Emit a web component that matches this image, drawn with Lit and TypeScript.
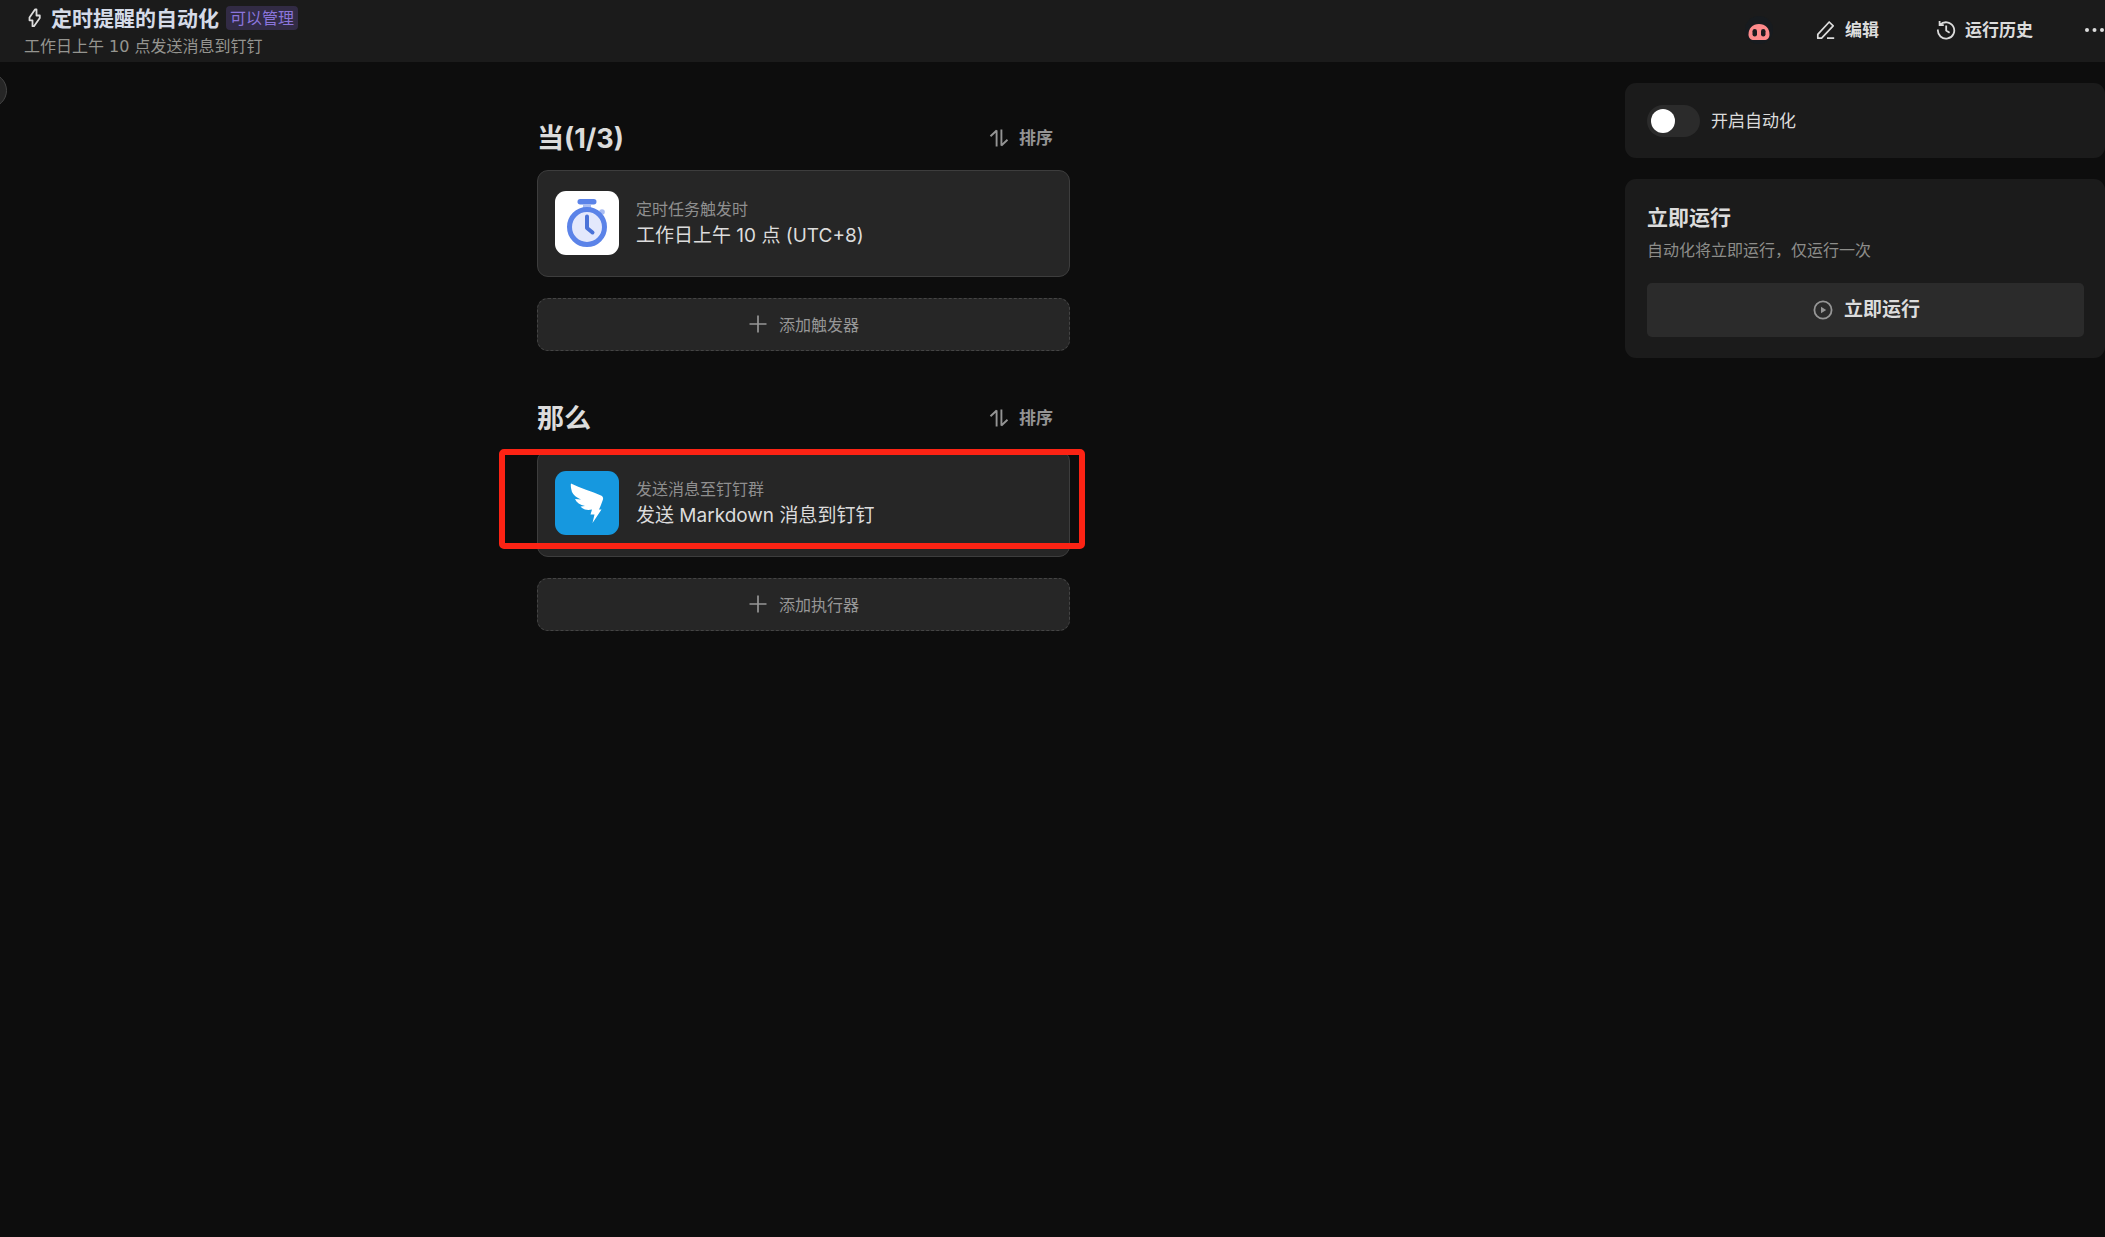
import { LitElement, html, svg, css, nothing } from "lit";
import { customElement, property, state } from "lit/decorators.js";

const icons = {
  bolt: svg`<path d="M11 1.500 5.500 9.500V12.300H8.500L8.500 18.200 10 18.200 15.800 10V7.500H12.500V1.500Z" fill="none" stroke="currentColor" stroke-width="1.800" stroke-linejoin="round"/>`,
  pig: svg`<circle cx="14" cy="14" r="14" fill="#171b1f"/><path d="M14 8C7.500 8 3.500 12.500 3.500 18.500 3.500 22 5.500 24 9 24h10c3.500 0 5.500-2 5.500-5.500C24.500 12.500 20.500 8 14 8Z" fill="#fe8b8c"/><rect x="7.500" y="13" width="4.500" height="7.500" rx="2.200" fill="#1b1b1f"/><rect x="16" y="13" width="4.500" height="7.500" rx="2.200" fill="#1b1b1f"/>`,
  edit: svg`<path d="M1.800 18.200V14.300L13.200 2 17.200 5.900 5.600 18.200ZM11 18.200h7.200" fill="none" stroke="currentColor" stroke-width="1.700" stroke-linejoin="round"/>`,
  history: svg`<path d="M4 4.900A8.200 8.200 0 1 1 1.900 9.500M3.600 1v4.200H7.800M10.200 5.500V10.600L13.600 12.800" fill="none" stroke="currentColor" stroke-width="1.800"/>`,
  more: svg`<circle cx="2" cy="10" r="2" fill="currentColor"/><circle cx="9.500" cy="10" r="2" fill="currentColor"/><circle cx="17" cy="10" r="2" fill="currentColor"/>`,
  sort: svg`<path d="M7.600 18.500V2.500L1.500 8.200M12.400 1.500V17.500L18.500 11.800" fill="none" stroke="currentColor" stroke-width="1.900" stroke-linejoin="bevel"/>`,
  plus: svg`<path d="M10 .500v17M1.500 9h17" fill="none" stroke="currentColor" stroke-width="1.700"/>`,
  play: svg`<circle cx="10" cy="10" r="8.600" fill="none" stroke="currentColor" stroke-width="1.800"/><path d="M8 6.800v6.400L13.200 10Z" fill="currentColor"/>`,
  clock: svg`<rect width="64" height="64" fill="#fff"/><circle cx="47" cy="21" r="2.800" fill="#a9bdf3"/><rect x="22.500" y="8" width="19" height="5.500" rx="2.700" fill="#5b83e8"/><path d="M28 13h8v4h-8Z" fill="#a9bdf3"/><circle cx="32" cy="36" r="17.500" fill="#e3e8fc" stroke="#5b83e8" stroke-width="5"/><path d="M32 25.500V37L37.500 41.500" fill="none" stroke="#4a72d8" stroke-width="4" stroke-linecap="round" stroke-linejoin="round"/>`,
  wing: svg`<rect width="64" height="64" fill="#1698df"/><path d="M16 12.500C25 17 37 20.500 46 24.500 48 25.500 48.500 27 47.800 29 46.500 32.500 45.500 35.500 44 38.500H46.500L37.500 52 39.500 43.500H35.500L37 38.500C32 39.500 28 38.500 25.500 35.500L30 35C25 34 21.500 31.500 20 28L26 28.500C20.500 26 17 23 16.500 19 16 17 15.500 14 16 12.500Z" fill="#fff"/>`,
};

type IconName = keyof typeof icons;
const wide: Partial<Record<IconName, number>> = { pig: 28, clock: 64, wing: 64 };

const icon = (name: IconName, cls = "icon") => {
  const size = wide[name] ?? 20;
  return html`<svg class=${cls} viewBox="0 0 ${size} ${size}" aria-hidden="true">${icons[name]}</svg>`;
};

const shared = css`
  * {
    box-sizing: border-box;
  }
  h1,
  h2,
  p {
    margin: 0;
  }
  button {
    margin: 0;
    padding: 0;
    border: 0;
    background: none;
    color: inherit;
    font: inherit;
    cursor: pointer;
  }
  .icon {
    display: block;
    flex: none;
    width: 20px;
    height: 20px;
  }
  .caption {
    line-height: 24px;
  }
`;

@customElement("flow-section")
class FlowSection extends LitElement {
  @property() heading = "";
  @property() glyph: IconName = "clock";
  @property() kind = "";
  @property() label = "";
  @property() addLabel = "";
  @property({ type: Boolean }) marked = false;

  static styles = [
    shared,
    css`
      :host {
        display: block;
      }
      .head {
        display: flex;
        align-items: center;
        justify-content: space-between;
        height: 42px;
        margin-bottom: 11px;
      }
      .heading {
        padding-top: 2px;
        font-size: 27px;
        line-height: 40px;
        font-weight: 700;
        color: #dcdcdc;
      }
      .sort {
        display: flex;
        align-items: center;
        gap: 10px;
        height: 42px;
        padding: 0 17px;
        font-size: 17px;
        font-weight: 700;
        color: #949494;
      }
      .slot {
        position: relative;
        margin-bottom: 21px;
      }
      .card {
        display: flex;
        align-items: center;
        gap: 17px;
        width: 100%;
        padding: 20px 17px 21px;
        border: 1px solid #3d3d3d;
        border-radius: 11px;
        background: #262626;
        text-align: left;
      }
      .picture {
        display: block;
        flex: none;
        width: 64px;
        height: 64px;
        border-radius: 11px;
      }
      .texts {
        display: flex;
        flex-direction: column;
      }
      .kind {
        font-size: 16px;
        line-height: 26px;
        color: #8f8f8f;
      }
      .label {
        font-size: 19px;
        line-height: 28px;
        color: #dcdcdc;
      }
      .add {
        display: flex;
        align-items: center;
        justify-content: center;
        gap: 11px;
        width: 100%;
        height: 53px;
        border: 1px dashed #444;
        border-radius: 11px;
        background: #262626;
        font-size: 16px;
        color: #969696;
      }
      .mark {
        position: absolute;
        inset: -1px -15px 8px -38px;
        border: 6px solid #fc2314;
        border-radius: 5px;
        pointer-events: none;
      }
    `,
  ];

  render() {
    return html`
      <section>
        <div class="head">
          <h2 class="heading">${this.heading}</h2>
          <button class="sort" type="button">${icon("sort")}<span class="caption">排序</span></button>
        </div>
        <div class="slot">
          <button class="card" type="button">
            ${icon(this.glyph, "picture")}
            <span class="texts">
              <span class="kind">${this.kind}</span>
              <span class="label">${this.label}</span>
            </span>
          </button>
          ${this.marked ? html`<div class="mark"></div>` : nothing}
        </div>
        <button class="add" type="button">${icon("plus")}<span class="caption">${this.addLabel}</span></button>
      </section>
    `;
  }
}

@customElement("app-root")
class AppRoot extends LitElement {
  @state() private enabled = false;

  static styles = [
    shared,
    css`
      :host {
        display: flex;
        flex-direction: column;
        min-height: 100vh;
        background: #0d0d0d;
        color: #dcdcdc;
        font-family: Inter, "Noto Sans CJK SC", sans-serif;
        overflow: hidden;
      }
      .bar {
        display: flex;
        align-items: flex-start;
        justify-content: space-between;
        height: 62px;
        padding: 6px 0 0 24px;
        background: #1b1b1b;
      }
      .title-row {
        display: flex;
        align-items: center;
        height: 24px;
        margin-bottom: 5px;
      }
      .title {
        margin: 0 7px;
        padding-top: 2px;
        font-size: 21px;
        line-height: 24px;
        font-weight: 700;
        color: #d5dbe8;
      }
      .badge {
        padding: 0 4px;
        border-radius: 4px;
        background: #322b45;
        font-size: 16px;
        line-height: 24px;
        color: #8b75dc;
      }
      .summary {
        font-family: "DejaVu Sans", "Noto Sans CJK SC", sans-serif;
        font-size: 16px;
        line-height: 24px;
        color: #959590;
      }
      .tools {
        display: flex;
        align-items: center;
        gap: 57px;
        height: 48px;
        font-size: 17px;
        font-weight: 700;
      }
      .tool {
        display: flex;
        align-items: center;
        gap: 9px;
      }
      .pig {
        display: block;
        width: 28px;
        height: 28px;
      }
      .user {
        margin-right: -14px;
      }
      .more {
        margin-left: -5px;
      }
      .body {
        position: relative;
        display: flex;
        flex: 1;
        gap: 18px;
      }
      .opener {
        position: absolute;
        top: 11px;
        left: -28px;
        width: 35px;
        height: 35px;
        border: 1px solid #444;
        border-radius: 50%;
        background: #262626;
      }
      .canvas {
        flex: 1;
        display: flex;
        flex-direction: column;
        align-items: center;
        padding-top: 55px;
      }
      .column {
        display: flex;
        flex-direction: column;
        gap: 46px;
        width: 100%;
        max-width: 533px;
      }
      .side {
        display: flex;
        flex: 0 1 480px;
        flex-direction: column;
        gap: 21px;
        padding-top: 21px;
      }
      .panel {
        padding: 23px 21px 21px 22px;
        border-radius: 11px;
        background: #1b1b1b;
      }
      .switch-row {
        display: flex;
        align-items: center;
        gap: 11px;
        padding: 22px 22px 21px;
        font-size: 17px;
        line-height: 24px;
      }
      .switch {
        display: flex;
        align-items: center;
        appearance: none;
        width: 53px;
        height: 32px;
        margin: 0;
        padding: 0 4px;
        border-radius: 16px;
        background: #2b2b2b;
        cursor: pointer;
      }
      .switch::before {
        content: "";
        width: 24px;
        height: 24px;
        border-radius: 50%;
        background: #fff;
      }
      .switch:checked {
        justify-content: flex-end;
        background: #7b67ee;
      }
      .panel-title {
        font-size: 21px;
        line-height: 32px;
        font-weight: 700;
      }
      .panel-note {
        margin-bottom: 17px;
        font-size: 16px;
        line-height: 32px;
        color: #8d8d8a;
      }
      .run {
        display: flex;
        align-items: center;
        justify-content: center;
        gap: 11px;
        width: 100%;
        height: 54px;
        padding-left: 2px;
        border-radius: 5px;
        background: #2b2b2b;
        font-size: 19px;
        font-weight: 700;
      }
      .run .icon {
        color: #969696;
      }
    `,
  ];

  render() {
    return html`
      <header class="bar">
        <div>
          <div class="title-row">
            ${icon("bolt")}
            <h1 class="title">定时提醒的自动化</h1>
            <span class="badge">可以管理</span>
          </div>
          <p class="summary">工作日上午 10 点发送消息到钉钉</p>
        </div>
        <nav class="tools">
          <button class="tool user" type="button" aria-label="助手">${icon("pig", "pig")}</button>
          <button class="tool" type="button">${icon("edit")}<span class="caption">编辑</span></button>
          <button class="tool" type="button">${icon("history")}<span class="caption">运行历史</span></button>
          <button class="tool more" type="button" aria-label="更多">${icon("more")}</button>
        </nav>
      </header>
      <div class="body">
        <button class="opener" type="button" aria-label="展开"></button>
        <main class="canvas">
          <div class="column">
            <flow-section
              heading="当(1/3)"
              glyph="clock"
              kind="定时任务触发时"
              label="工作日上午 10 点 (UTC+8)"
              .addLabel=${"添加触发器"}
            ></flow-section>
            <flow-section
              heading="那么"
              glyph="wing"
              kind="发送消息至钉钉群"
              label="发送 Markdown 消息到钉钉"
              .addLabel=${"添加执行器"}
              marked
            ></flow-section>
          </div>
        </main>
        <aside class="side">
          <div class="panel switch-row">
            <input
              id="enabled"
              class="switch"
              type="checkbox"
              role="switch"
              .checked=${this.enabled}
              @change=${(e: Event) => (this.enabled = (e.target as HTMLInputElement).checked)}
            />
            <label for="enabled">开启自动化</label>
          </div>
          <section class="panel">
            <h2 class="panel-title">立即运行</h2>
            <p class="panel-note">自动化将立即运行，仅运行一次</p>
            <button class="run" type="button">${icon("play")}<span class="caption">立即运行</span></button>
          </section>
        </aside>
      </div>
    `;
  }
}
